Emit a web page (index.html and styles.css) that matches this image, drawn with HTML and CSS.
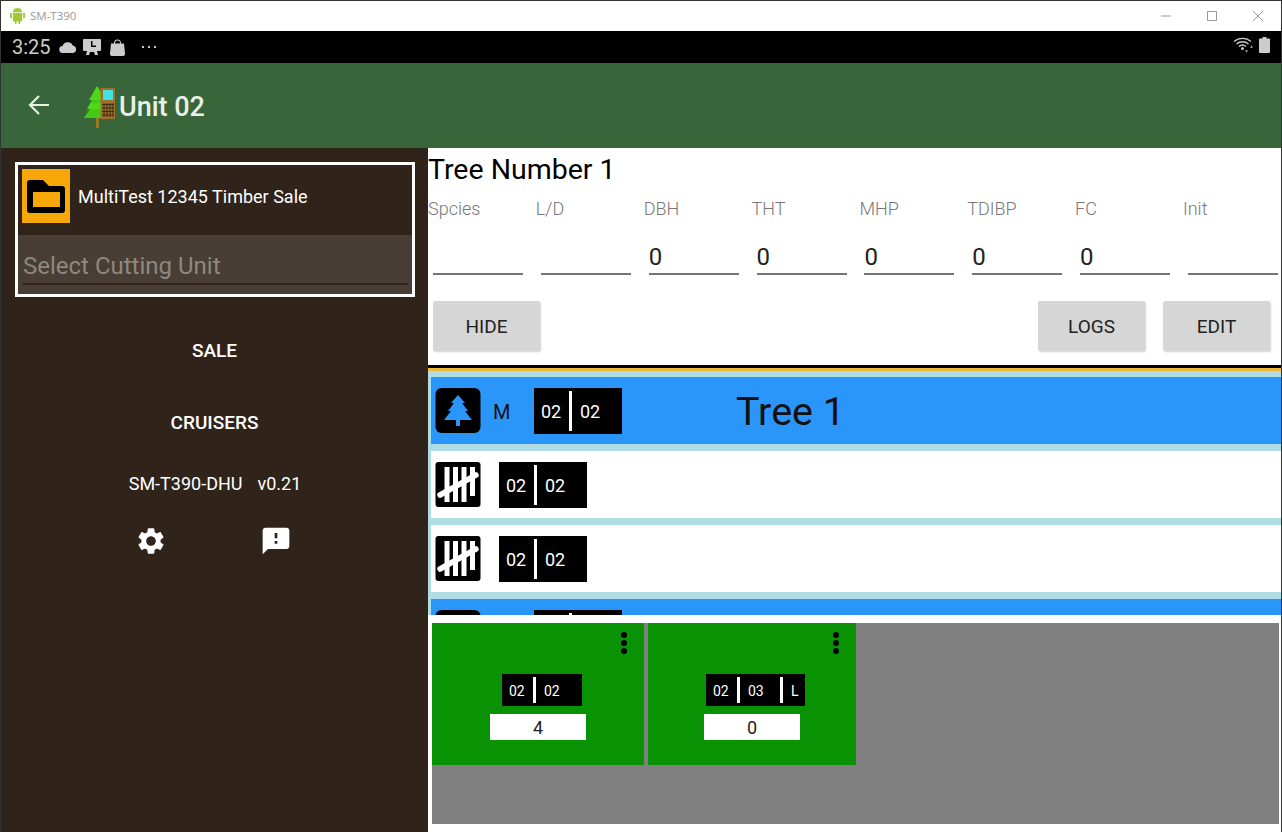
FILE: index.html
```html
<!DOCTYPE html>
<html lang="en">

<head>
  <meta charset="UTF-8">
  <meta name="viewport" content="width=device-width, initial-scale=1.0">
  <title>SM-T390</title>
  <link rel="stylesheet" href="styles.css">
</head>

<body>
  <div class="window">
    <!-- Emulator title bar -->
    <div class="titlebar">
      <svg class="android" viewBox="0 0 16 18">
        <path fill="#a4c639" d="M3 6h10v8a1 1 0 0 1-1 1h-1v2a1 1 0 0 1-2 0v-2H7v2a1 1 0 0 1-2 0v-2H4a1 1 0 0 1-1-1zM1 6a1 1 0 0 1 1 1v4a1 1 0 0 1-2 0V7a1 1 0 0 1 1-1zM15 6a1 1 0 0 1 1 1v4a1 1 0 0 1-2 0V7a1 1 0 0 1 1-1zM3 5.300C3 3.600 4 2.500 5 2L4.200.5l.4-.2L5.500 1.800a5 5 0 0 1 5 0L11.400.3l.4.2L11 2c1 .5 2 1.600 2 3.300z" />
      </svg>
      <span class="title-text">SM-T390</span>
      <div class="win-controls">
        <svg viewBox="0 0 12 12"><path d="M1 6h10" stroke="#999" fill="none" /></svg>
        <svg viewBox="0 0 12 12"><path d="M1.500 1.500h9v9h-9z" stroke="#999" fill="none" /></svg>
        <svg viewBox="0 0 12 12"><path d="M1 1l10 10M11 1L1 11" stroke="#999" fill="none" /></svg>
      </div>
    </div>

    <!-- Android status bar -->
    <div class="statusbar">
      <span class="clock">3:25</span>
      <svg class="st-cloud" viewBox="0 0 18 11"><path fill="#ccc" d="M4 11a3.500 3.500 0 0 1-.5-7A5.500 5.500 0 0 1 13.800 3.500 3.800 3.800 0 0 1 14 11z" /></svg>
      <svg class="st-icon" viewBox="0 0 18 16"><path fill="#ccc" fill-rule="evenodd" d="M1 0h16a1 1 0 0 1 1 1v10a1 1 0 0 1-1 1h-3l1 4h-3l-1-3H7l-1 3H3l1-4H1a1 1 0 0 1-1-1V1a1 1 0 0 1 1-1zM8 2v6h5V6.500H9.500V2z" /></svg>
      <svg class="st-bag" viewBox="0 0 15 17"><path fill="#ccc" d="M4 4.500V4a3.500 3.500 0 0 1 7 0v.5h3l1 10a2 2 0 0 1-2 2.500H2a2 2 0 0 1-2-2.500l1-10zM5 4.500h5V4a2.500 2.500 0 0 0-5 0z" /></svg>
      <span class="st-dots">
        <i></i><i></i><i></i>
      </span>
      <span class="st-right">
        <svg class="st-wifi" viewBox="0 0 21 17">
          <path fill="none" stroke="#ccc" stroke-width="1.400" d="M1 5.500a13 13 0 0 1 17 0M3.500 8a9 9 0 0 1 12 0M6 10.500a5.500 5.500 0 0 1 7 0" />
          <circle cx="9.500" cy="12.500" r="1.500" fill="#ccc" />
          <path fill="#888" d="M12 14h3l-1.500 3zM17 12h3l-1.500-3z" />
        </svg>
        <svg class="st-batt" viewBox="0 0 11 16"><path fill="#ccc" d="M3.500 0h4v1.500H10a1 1 0 0 1 1 1V15a1 1 0 0 1-1 1H1a1 1 0 0 1-1-1V2.500a1 1 0 0 1 1-1h2.500z" /></svg>
      </span>
    </div>

    <!-- App bar -->
    <header class="appbar">
      <svg class="back" viewBox="0 0 22 22"><path d="M21 11H2M11 2l-9 9 9 9" fill="none" stroke="#e8f0e8" stroke-width="2.200" /></svg>
      <svg class="logo" viewBox="0 0 32 43">
        <rect x="12" y="33" width="3" height="10" fill="#9a7a22" />
        <path fill="#4fd81a" d="M13 1l6 9v23H0l6-9H3l5-9H5z" />
        <path fill="#2aa80e" d="M3 24h15v9H0zM8 15h10v3H6z" opacity=".3" />
        <rect x="16.500" y="3" width="14.500" height="31" fill="#a0702c" />
        <rect x="19" y="5" width="10" height="10" fill="#3fe3e0" />
        <path fill="none" stroke="#3c2c16" stroke-width="1" d="M18 19.500h12M18 23h12M18 26.500h12M18 30h12M20 18v14M23 18v14M26 18v14M29 18v14" />
      </svg>
      <span class="appbar-title">Unit 02</span>
    </header>

    <div class="content">
      <aside class="sidebar">
        <div class="sale-box">
          <div class="sale-row">
            <span class="folder">
              <svg viewBox="0 0 48 54"><path fill="#000" d="M8 11h13l6 6h13a3 3 0 0 1 3 3v21a3 3 0 0 1-3 3H8a3 3 0 0 1-3-3V14a3 3 0 0 1 3-3z" /><rect x="11" y="23" width="27" height="15" fill="#f7a707" /></svg>
            </span>
            <span class="sale-name">MultiTest 12345 Timber Sale</span>
          </div>
          <div class="unit-select">
            <span class="unit-text">Select Cutting Unit</span>
          </div>
        </div>

        <div class="side-link link-sale">SALE</div>
        <div class="side-link link-cruisers">CRUISERS</div>
        <div class="device-line"><span>SM-T390-DHU</span><span>v0.21</span></div>

        <div class="side-icons">
          <svg viewBox="0 0 24 24"><path fill="#fff" d="M19.140 12.940c.04-.3.06-.61.06-.94 0-.32-.02-.64-.07-.94l2.030-1.580c.18-.14.23-.41.12-.61l-1.920-3.320c-.12-.22-.37-.29-.59-.22l-2.390.96c-.5-.38-1.030-.7-1.620-.94l-.36-2.540c-.04-.24-.24-.41-.48-.41h-3.840c-.24 0-.43.17-.47.41l-.36 2.540c-.59.24-1.130.57-1.620.94l-2.390-.96c-.22-.08-.47 0-.59.22L2.740 8.870c-.12.21-.08.47.12.61l2.030 1.580c-.05.3-.09.63-.09.94s.02.64.07.94l-2.030 1.580c-.18.14-.23.41-.12.61l1.920 3.320c.12.22.37.29.59.22l2.390-.96c.5.38 1.030.7 1.620.94l.36 2.540c.05.24.24.41.48.41h3.840c.24 0 .44-.17.47-.41l.36-2.540c.59-.24 1.130-.56 1.620-.94l2.390.96c.22.08.47 0 .59-.22l1.920-3.320c.12-.22.07-.47-.12-.61l-2.010-1.580zM12 15.600c-1.980 0-3.600-1.620-3.600-3.600s1.620-3.600 3.600-3.600 3.600 1.620 3.600 3.600-1.620 3.600-3.600 3.600z" /></svg>
          <svg viewBox="0 0 24 24"><path fill="#fff" d="M20 2H4c-1.100 0-1.990.9-1.990 2L2 22l4-4h14c1.100 0 2-.9 2-2V4c0-1.100-.9-2-2-2zm-7 12h-2v-2h2v2zm0-4h-2V6h2v4z" /></svg>
        </div>
      </aside>

      <main class="main">
        <section class="tree-form">
          <h1 class="tree-title">Tree Number 1</h1>
          <div class="fields">
            <div class="field"><label>Spcies</label><div class="input"></div></div>
            <div class="field"><label>L/D</label><div class="input"></div></div>
            <div class="field"><label>DBH</label><div class="input">0</div></div>
            <div class="field"><label>THT</label><div class="input">0</div></div>
            <div class="field"><label>MHP</label><div class="input">0</div></div>
            <div class="field"><label>TDIBP</label><div class="input">0</div></div>
            <div class="field"><label>FC</label><div class="input">0</div></div>
            <div class="field"><label>Init</label><div class="input"></div></div>
          </div>
          <div class="buttons">
            <button>HIDE</button>
            <button class="push-right">LOGS</button>
            <button>EDIT</button>
          </div>
        </section>

        <div class="rule-black"></div>
        <div class="rule-orange"></div>

        <div class="tree-list">
          <div class="row row-blue">
            <svg class="row-icon" viewBox="0 0 46 46"><use href="#tree-icon" /></svg>
            <span class="row-code">M</span>
            <div class="tag"><span>02</span><span>02</span></div>
            <span class="row-name">Tree 1</span>
          </div>
          <div class="row">
            <svg class="row-icon" viewBox="0 0 46 46"><use href="#tally-icon" /></svg>
            <div class="tag tag-gap"><span>02</span><span>02</span></div>
          </div>
          <div class="row">
            <svg class="row-icon" viewBox="0 0 46 46"><use href="#tally-icon" /></svg>
            <div class="tag tag-gap"><span>02</span><span>02</span></div>
          </div>
          <!-- only the top edge of this row is visible above the fold -->
          <div class="row row-blue">
            <svg class="row-icon" viewBox="0 0 46 46"><use href="#tree-icon" /></svg>
            <span class="row-code"></span>
            <div class="tag"><span></span><span></span></div>
          </div>
        </div>

        <div class="counters">
          <div class="counter">
            <div class="kebab"><i></i><i></i><i></i></div>
            <div class="mini-tag"><span>02</span><span>02</span></div>
            <div class="count">4</div>
          </div>
          <div class="counter counter-second">
            <div class="kebab"><i></i><i></i><i></i></div>
            <div class="mini-tag mini-tag-wide"><span>02</span><span>03</span><span>L</span></div>
            <div class="count">0</div>
          </div>
        </div>
      </main>
    </div>
  </div>

  <!-- shared row icons -->
  <svg class="defs" width="0" height="0">
    <symbol id="tree-icon" viewBox="0 0 46 46">
      <rect x=".5" width="45" height="45" rx="6" fill="#000" />
      <path fill="#2b96f9" d="M23 7l7 8h-3l6 8h-3l7 9H25v6h-4v-6H9l7-9h-3l6-8h-3z" />
    </symbol>
    <symbol id="tally-icon" viewBox="0 0 46 46">
      <rect x=".5" width="45" height="45" rx="3" fill="#000" />
      <path fill="none" stroke="#fff" stroke-width="5" d="M12 5v35M20.500 5v35M29 5v35M37.500 5v29" />
      <path fill="none" stroke="#fff" stroke-width="5.500" stroke-linecap="round" d="M5 33L41 13" />
    </symbol>
  </svg>
</body>

</html>
```

FILE: styles.css
```css
html,
body {
  padding: 0;
  margin: 0;
  overflow: hidden;
  background: #fff;
}

body {
  font-family: Roboto, "Liberation Sans", sans-serif;
}

.window {
  width: 1280px;
  height: 831px;
  border: 1px solid #333;
  border-bottom: 0;
  display: flex;
  flex-direction: column;
  overflow: hidden;
}

.defs {
  display: block;
}

/* title bar */
.titlebar {
  height: 30px;
  flex: none;
  background: #fff;
  display: flex;
  align-items: center;
  padding-left: 9px;
}

.android {
  width: 15px;
  height: 17px;
  margin-bottom: 2px;
}

.title-text {
  margin-left: 5px;
  margin-bottom: 1px;
  font-family: "Open Sans", sans-serif;
  font-size: 11.500px;
  color: #999;
}

.win-controls {
  margin-left: auto;
  display: flex;
  gap: 34px;
  padding-right: 17px;
}

.win-controls svg {
  width: 12px;
  height: 12px;
}

/* status bar */
.statusbar {
  height: 32px;
  flex: none;
  background: #000;
  display: flex;
  align-items: center;
  padding-left: 11px;
  color: #ccc;
}

.clock {
  font-size: 20px;
  width: 47px;
}

.st-cloud {
  width: 18px;
  height: 11px;
}

.st-icon {
  width: 18px;
  height: 16px;
  margin-left: 6px;
}

.st-bag {
  width: 15px;
  height: 17px;
  margin-left: 9px;
}

.st-dots {
  display: flex;
  gap: 4px;
  margin-left: 17px;
}

.st-dots i {
  width: 2px;
  height: 2px;
  background: #ccc;
}

.st-right {
  margin-left: auto;
  display: flex;
  align-items: flex-end;
  gap: 5px;
  padding-right: 11px;
  margin-bottom: 6px;
}

.st-wifi {
  width: 21px;
  height: 17px;
}

.st-batt {
  width: 11px;
  height: 16px;
}

/* app bar */
.appbar {
  height: 85px;
  flex: none;
  background: #38663a;
  display: flex;
  align-items: center;
  padding-left: 27px;
}

.back {
  width: 22px;
  height: 22px;
  margin-bottom: 1px;
}

.logo {
  width: 32px;
  height: 43px;
  margin-left: 34px;
  margin-top: 1px;
}

.appbar-title {
  margin-left: 3px;
  padding-top: 2px;
  font-size: 27px;
  font-weight: 500;
  color: #e8f0e8;
}

/* body */
.content {
  flex: 1;
  min-height: 0;
  display: flex;
}

.sidebar {
  width: 427px;
  flex: none;
  background: #30241a;
  padding: 14px 0 0 14px;
  box-sizing: border-box;
  color: #fff;
}

.sale-box {
  width: 400px;
  height: 135px;
  box-sizing: border-box;
  border: 3px solid #fff;
  display: flex;
  flex-direction: column;
}

.sale-row {
  height: 70px;
  display: flex;
  padding: 4px 0 0 4px;
  box-sizing: border-box;
}

.folder {
  width: 48px;
  height: 54px;
  background: #f7a707;
  flex: none;
}

.folder svg {
  display: block;
  width: 48px;
  height: 54px;
}

.sale-name {
  margin-left: 8px;
  font-size: 18px;
  line-height: 56px;
  height: 54px;
}

.unit-select {
  flex: 1;
  background: #483e35;
  padding: 0 4px 0 5px;
}

.unit-text {
  display: block;
  height: 50px;
  box-sizing: border-box;
  padding-top: 17px;
  border-bottom: 2px solid #30241a;
  font-size: 24px;
  line-height: 28px;
  color: #8f887f;
}

.side-link {
  width: 399px;
  text-align: center;
  font-size: 19px;
  font-weight: 500;
  line-height: 24px;
}

.link-sale {
  margin-top: 42px;
}

.link-cruisers {
  margin-top: 48px;
}

.device-line {
  width: 400px;
  display: flex;
  justify-content: center;
  gap: 15px;
  margin-top: 37px;
  font-size: 18px;
  line-height: 24px;
}

.side-icons {
  display: flex;
  gap: 93px;
  margin: 29px 0 0 120px;
}

.side-icons svg {
  width: 32px;
  height: 32px;
}

/* right side */
.main {
  flex: 1;
  min-width: 0;
  background: #fff;
  display: flex;
  flex-direction: column;
}

.tree-form {
  height: 217px;
  flex: none;
  overflow: hidden;
}

.tree-title {
  margin: 0;
  height: 43px;
  font-size: 28.500px;
  font-weight: 400;
  line-height: 43px;
  color: #000;
}

.fields {
  display: grid;
  grid-template-columns: repeat(8, 107.850px);
  width: 863px;
}

.field label {
  display: block;
  font-size: 18px;
  line-height: 22px;
  margin-top: 7px;
  color: #777;
  font-weight: 300;
}

.input {
  width: 90px;
  height: 55px;
  margin-left: 5px;
  box-sizing: border-box;
  border-bottom: 2px solid #757575;
  font-size: 24px;
  line-height: 36px;
  padding-top: 19px;
  color: #222;
}

.buttons {
  display: flex;
  gap: 18px;
  margin: 26px 11px 0 5px;
}

.buttons button {
  width: 107px;
  height: 50px;
  border: 0;
  border-radius: 2px;
  background: #d6d6d6;
  box-shadow: 1px 1px 2px rgba(0, 0, 0, .18);
  font-family: Roboto, sans-serif;
  font-size: 19px;
  font-weight: 400;
  color: #222;
  padding: 0;
}

.buttons .push-right {
  margin-left: auto;
}

.rule-black {
  height: 3px;
  flex: none;
  background: #000;
}

.rule-orange {
  height: 3px;
  flex: none;
  background: #f2b83a;
}

.tree-list {
  height: 244px;
  flex: none;
  overflow: hidden;
  background: #b0dce4;
  padding: 6px 0 0 3px;
  box-sizing: border-box;
}

.row {
  height: 67px;
  margin-bottom: 7px;
  background: #fff;
  display: flex;
  align-items: center;
  padding-left: 4px;
}

.row-blue {
  background: #2b96f9;
}

.row-icon {
  width: 46px;
  height: 46px;
  flex: none;
}

.row-code {
  width: 41px;
  margin-left: 12px;
  padding-top: 2px;
  font-size: 20px;
  color: #111;
}

.row-name {
  margin-left: 114px;
  padding-top: 2px;
  font-size: 39.500px;
  color: #111;
}

.tag {
  width: 88px;
  height: 46px;
  background: #000;
  display: flex;
  align-items: center;
  box-sizing: border-box;
  padding-left: 7px;
  color: #fff;
  font-size: 18px;
}

.tag span {
  height: 40px;
  line-height: 42px;
}

.tag span:first-child {
  width: 28px;
  border-right: 3px solid #fff;
  margin-right: 8px;
}

.tag-gap {
  margin-left: 18px;
}

.counters {
  flex: 1;
  margin: 8px 2px 8px 4px;
  background: #808080;
  display: flex;
  align-items: flex-start;
  gap: 4px;
}

.counter {
  width: 212px;
  height: 142px;
  background: #099304;
  display: flex;
  flex-direction: column;
  align-items: center;
  position: relative;
  padding-top: 51px;
  box-sizing: border-box;
}

.counter-second {
  width: 208px;
}

.kebab {
  position: absolute;
  top: 9px;
  right: 17px;
  display: flex;
  flex-direction: column;
  gap: 2px;
}

.kebab i {
  width: 6px;
  height: 6px;
  border-radius: 50%;
  background: #000;
}

.mini-tag {
  width: 80px;
  height: 32px;
  margin-left: 8px;
  background: #000;
  color: #fff;
  display: flex;
  align-items: center;
  box-sizing: border-box;
  padding-left: 7px;
  font-size: 14px;
}

.mini-tag span {
  height: 26px;
  line-height: 28px;
}

.mini-tag span:not(:last-child) {
  border-right: 3px solid #fff;
  margin-right: 8px;
  width: 24px;
}

.mini-tag-wide {
  width: 99px;
  margin-left: 7px;
}

.mini-tag-wide span:nth-child(2) {
  width: 32px;
}

.count {
  width: 96px;
  height: 26px;
  margin-top: 8px;
  background: #fff;
  text-align: center;
  font-size: 18px;
  line-height: 28px;
  color: #222;
}
```
